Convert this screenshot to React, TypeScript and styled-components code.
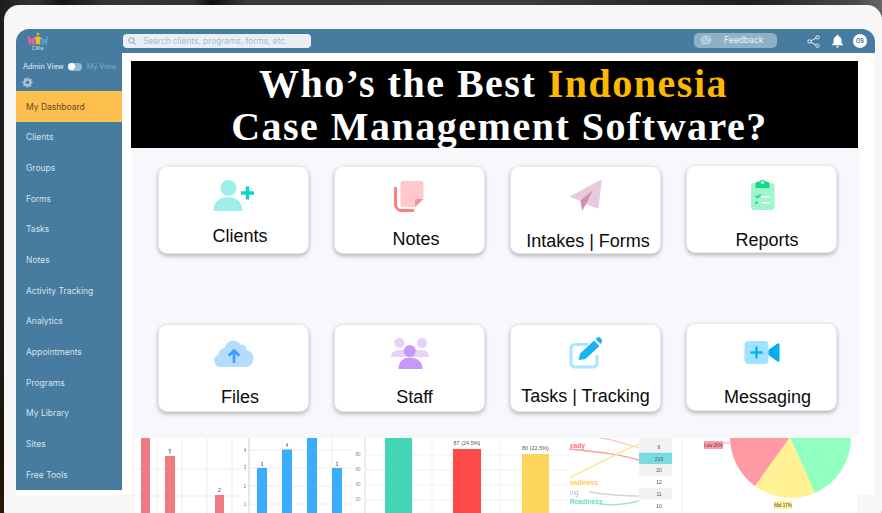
import React from "react";
import styled, { createGlobalStyle } from "styled-components";

const Global = createGlobalStyle`
  html, body { margin: 0; padding: 0; width: 882px; height: 513px; overflow: hidden; }
  body {
    background:
      linear-gradient(90deg, #1d1d1b 0, #36362f 4%, #141412 7%, #35352f 12%, #333 22%, #0e0e0e 24%, #3a3a36 28%, #3d3b37 60%, #1e1e1e 85%, #4a4a46 97%, #666 100%);
    font-family: "Inter", "Liberation Sans", sans-serif;
  }
`;

const Backdrop = styled.div`
  width: 882px;
  height: 513px;
  overflow: hidden;
  padding: 5px 0 0 4px;
  box-sizing: border-box;
  background: linear-gradient(180deg, transparent 0, transparent 60%, #1c1206 90%, #2a1a08 100%);
`;

const Frame = styled.div`
  width: 878px;
  height: 520px;
  padding: 24px 7px 0 12px;
  box-sizing: border-box;
  background: #f7f7f7;
  border-radius: 15px;
`;

const Shell = styled.div`
  width: 859px;
  height: 466px;
  background: #fff;
  border-radius: 13px 13px 0 0;
  display: flex;
  flex-direction: column;
`;

const Header = styled.header`
  height: 24px;
  flex: none;
  background: #477ba0;
  border-radius: 13px 13px 0 0;
  display: flex;
  align-items: center;
  padding: 0 8px 0 10px;
`;

const LogoBox = styled.div`
  width: 97px;
  flex: none;
  display: flex;
`;

const SearchBox = styled.div`
  width: 188px;
  height: 14px;
  background: #e9eff3;
  border-radius: 4px;
  display: flex;
  align-items: center;
  gap: 7px;
  padding-left: 5px;
  box-sizing: border-box;
  color: #a9bccb;
  font-size: 8.3px;
  white-space: nowrap;
`;

const FeedbackPill = styled.div`
  width: 83px;
  height: 15px;
  margin-left: auto;
  margin-top: -2px;
  background: #8fb1c8;
  border-radius: 5px;
  display: flex;
  align-items: center;
  gap: 12px;
  padding-left: 6px;
  box-sizing: border-box;
  color: #eaf1f6;
  font-size: 8.5px;
`;

const HeaderIcons = styled.div`
  display: flex;
  align-items: center;
  margin-left: 30px;
  gap: 11px;
`;

const Avatar = styled.div`
  width: 14px;
  height: 14px;
  margin-left: -2px;
  border-radius: 50%;
  background: #fff;
  color: #477ba0;
  font-size: 5.5px;
  font-weight: 700;
  display: flex;
  align-items: center;
  justify-content: center;
`;

const Body = styled.div`
  display: flex;
  flex: 1;
  min-height: 0;
`;

const Sidebar = styled.aside`
  width: 106px;
  height: 437px;
  flex: none;
  background: #477ba0;
  display: flex;
  flex-direction: column;
`;

const ViewRow = styled.div`
  display: flex;
  align-items: center;
  height: 18px;
  margin-top: 5px;
  padding-left: 7px;
  font-size: 7.25px;
  color: #e4edf3;
  white-space: nowrap;
`;

const Toggle = styled.span`
  width: 14px;
  height: 8px;
  border-radius: 4px;
  background: #9ab8cc;
  margin: 0 5px 0 4px;
  display: flex;
  align-items: center;
  &::before {
    content: "";
    width: 7px;
    height: 7px;
    border-radius: 50%;
    background: #fff;
  }
`;

const MutedLabel = styled.span`
  color: #85a9c1;
`;

const GearRow = styled.div`
  height: 16px;
  padding-left: 6px;
  display: flex;
  align-items: flex-start;
  padding-top: 1px;
  box-sizing: border-box;
`;

const NavItem = styled.div<{ $active?: boolean }>`
  height: 30.67px;
  flex: none;
  display: flex;
  align-items: center;
  padding-left: 10px;
  font-size: 8.5px;
  color: ${(p) => (p.$active ? "#5d4b26" : "#d5e2eb")};
  background: ${(p) => (p.$active ? "#fdbf4d" : "transparent")};
`;

const Main = styled.main`
  flex: 1;
  min-width: 0;
  padding: 8px 0 0 9px;
  display: flex;
  flex-direction: column;
`;

const Banner = styled.div`
  width: 727px;
  height: 87px;
  flex: none;
  box-sizing: border-box;
  padding-top: 1px;
  background: #000;
  color: #fff;
  font-family: "Liberation Serif", serif;
  font-weight: 700;
  font-size: 40px;
  line-height: 43px;
  letter-spacing: 1.5px;
  display: flex;
  flex-direction: column;
  align-items: center;
  white-space: nowrap;
`;

const BannerLine = styled.div<{ $shift: number }>`
  margin-left: ${(p) => p.$shift}px;
`;

const Gold = styled.span`
  color: #fdb900;
`;

const Panel = styled.section`
  width: 728px;
  height: 290px;
  flex: none;
  margin-left: 1px;
  box-sizing: border-box;
  background: #f7f8fb;
  border-radius: 0 0 8px 0;
  padding: 18px 0 0 26px;
  display: grid;
  grid-template-columns: repeat(4, 151px);
  grid-auto-rows: 88px;
  column-gap: 25px;
  row-gap: 70px;
`;

const Card = styled.div<{ $lift?: number }>`
  background: #fff;
  border-radius: 9px;
  border: 1px solid #e8e8ea;
  box-sizing: border-box;
  height: 88px;
  margin-top: ${(p) => -(p.$lift ?? 0)}px;
  box-shadow: 0 2px 4px rgba(0, 0, 0, 0.28);
  display: flex;
  flex-direction: column;
  align-items: center;
  padding-top: 9px;
  color: #0c0c0c;
`;

const Label = styled.div<{ $top: number; $left?: number }>`
  height: 21px;
  line-height: 21px;
  margin-top: ${(p) => p.$top}px;
  margin-left: ${(p) => p.$left ?? 0}px;
  font-family: "Liberation Sans", Arial, sans-serif;
  font-size: 18px;
  white-space: nowrap;
`;

const ChartStrip = styled.div`
  width: 725px;
  height: 75px;
  flex: none;
  margin-left: 1px;
  background: #fff;
  display: flex;
  overflow: hidden;
  filter: blur(0.45px);
  font-family: "Liberation Sans", Arial, sans-serif;
`;

const Chart = styled.svg`
  flex: none;
  display: block;
`;

const IconSvg = styled.svg`
  flex: none;
  display: block;
`;

const Glyph: React.FC<{ children: React.ReactNode }> = ({ children }) => (
  <IconSvg width={48} height={36} viewBox="0 0 48 36">{children}</IconSvg>
);

const ClientsIcon = () => (
  <Glyph>
    <circle cx="18.5" cy="12" r="8" fill="#9eeee9" />
    <path d="M3.5 35c0-9 6-14 14.5-14s14.500 5 14.500 14z" fill="#9eeee9" />
    <path d="M37.500 10.500v13M31 17h13" stroke="#0ed3cd" strokeWidth="3.500" fill="none" />
  </Glyph>
);

const NotesIcon = () => (
  <Glyph>
    <path d="M9.500 12v16.500a6 6 0 0 0 6 6h11.500" stroke="#ff7f7f" strokeWidth="3" fill="none" strokeLinecap="round" />
    <path d="M17 5h18a2.500 2.500 0 0 1 2.500 2.500V23L29 31H17a2.500 2.500 0 0 1-2.500-2.500v-21A2.500 2.500 0 0 1 17 5z" fill="#ffc9c9" />
    <path d="M37.500 23L29 31v-6a2 2 0 0 1 2-2z" fill="#ff8f8f" />
  </Glyph>
);

const PlaneIcon = () => (
  <Glyph>
    <path d="M39.200 4L8.500 20.700l10 3.800 6 3.500L36 32z" fill="#e8c9dd" strokeLinejoin="round" stroke="#e8c9dd" />
    <path d="M31 14L18.500 24.500 20 34.700l3.500-5.700z" fill="#cf8fb9" />
  </Glyph>
);

const ReportsIcon = () => (
  <Glyph>
    <rect x="13" y="8" width="23.500" height="27" rx="3" fill="#9ff5cc" />
    <path d="M17.500 13v-3.500a3 3 0 0 1 3-3h1a3.500 3.500 0 0 1 6 0h1a3 3 0 0 1 3 3V13z" fill="#10dc85" />
    <circle cx="24.500" cy="7.500" r="1.600" fill="#fff" />
    <path d="M17.500 20.700l2 2 3.200-3.500" stroke="#10dc85" strokeWidth="1.600" fill="none" />
    <circle cx="18.500" cy="27.700" r="1.300" fill="#10dc85" />
    <path d="M24 21.700h7.500M24 27.700h7.500" stroke="#fff" strokeWidth="1.600" strokeLinecap="round" />
  </Glyph>
);

const FilesIcon = () => (
  <Glyph>
    <path d="M11 33a6.500 6.500 0 0 1-2.500-12.600 7.500 7.500 0 0 1 6-6.400C16 9 20 6 24.500 6.500c3 .3 5 2 6 4.500 3.500-.7 6 1.500 6 5 4 .8 7 4 7 8.500 0 5-3.800 8.500-8.500 8.500z" fill="#b5dbff" />
    <path d="M24 28V17M19.500 21l4.500-4.500 4.500 4.500" stroke="#3b9bff" strokeWidth="2.600" fill="none" strokeLinecap="round" strokeLinejoin="round" />
  </Glyph>
);

const StaffIcon = () => (
  <Glyph>
    <circle cx="13.500" cy="9" r="5" fill="#e6d0fc" />
    <circle cx="36" cy="9" r="5" fill="#e6d0fc" />
    <path d="M5 23c0-4.500 3.500-7 8.500-7h21c5 0 8.500 2.500 8.500 7z" fill="#e6d0fc" />
    <circle cx="23.800" cy="17" r="6" fill="#c598f9" />
    <path d="M12.500 35c0-7.500 4.500-11.500 11.500-11.500S36.500 27.500 36.500 35z" fill="#c598f9" />
  </Glyph>
);

const TasksIcon = () => (
  <Glyph>
    <path d="M26 10.500H13a4 4 0 0 0-4 4V29a4 4 0 0 0 4 4h18a4 4 0 0 0 4-4V21" stroke="#a6e6ff" strokeWidth="3" fill="none" />
    <path d="M16.500 26l1.700-6.500L32 6.500l5.500 5.500L23.500 25z" fill="#16b3f5" />
    <path d="M33.500 5l1.800-1.500a2 2 0 0 1 2.500 0l2 2a2 2 0 0 1 0 2.500L38.500 10z" fill="#16b3f5" />
  </Glyph>
);

const VideoIcon = () => (
  <Glyph>
    <rect x="6.500" y="8" width="24" height="23" rx="4" fill="#9fe3ff" />
    <path d="M18.500 14.500v10M13.500 19.500h10" stroke="#0aaef0" strokeWidth="2.400" strokeLinecap="round" />
    <path d="M30.500 17l9-6.500a1.500 1.500 0 0 1 2 1v16a1.500 1.500 0 0 1-2 1l-9-6.500z" fill="#00aff0" />
  </Glyph>
);

const Logo = () => (
  <svg width="24" height="21" viewBox="0 0 26 22">
    <circle cx="13" cy="3" r="1.600" fill="#f5a623" />
    <circle cx="3" cy="6" r="1.200" fill="#f2648e" />
    <circle cx="23" cy="6" r="1.200" fill="#4fa3d1" />
    <path d="M2 7l4 1.500L9 7v8H7v-3H5v3H3.500z" fill="#f2648e" />
    <path d="M17 7l3 1.500L24 7l-1.500 8H21v-3h-2v3h-2z" fill="#4fa3d1" />
    <path d="M8.500 7.500L13 5l4.500 2.500-2 1.500V14h-5V9z" fill="#f7b52c" />
    <text x="13" y="20.500" fontSize="5" letterSpacing="0.6" textAnchor="middle" fill="#dbe6ee" fontFamily="Liberation Sans">CMw</text>
  </svg>
);

const SearchGlyph = () => (
  <svg width="8" height="8" viewBox="0 0 8 8">
    <circle cx="3.400" cy="3.400" r="2.500" stroke="#9db4c5" strokeWidth="1.100" fill="none" />
    <path d="M5.300 5.300L7.500 7.500" stroke="#9db4c5" strokeWidth="1.100" />
  </svg>
);

const BubbleGlyph = () => (
  <svg width="12" height="11" viewBox="0 0 12 11">
    <path d="M6 .5c3 0 5.500 1.900 5.500 4.500S9 9.500 6 9.500c-.7 0-1.300-.1-2-.3L1.500 10.500l.6-2.500C1 7.200.500 6.100.500 5 .500 2.400 3 .5 6 .5z" fill="#b5cddd" />
    <circle cx="4.200" cy="4" r=".7" fill="#8fb1c8" />
    <circle cx="7.800" cy="4" r=".7" fill="#8fb1c8" />
    <path d="M3.800 5.800c1.200 1.200 3.200 1.200 4.400 0" stroke="#8fb1c8" strokeWidth=".7" fill="none" />
  </svg>
);

const ShareGlyph = () => (
  <svg width="13" height="13" viewBox="0 0 13 13">
    <path d="M10.500 2.300L2.500 6.500l8 4.200" stroke="#e8f0f5" strokeWidth="1" fill="none" />
    <circle cx="10.500" cy="2.300" r="1.700" fill="#477ba0" stroke="#e8f0f5" strokeWidth="1" />
    <circle cx="2.500" cy="6.500" r="1.700" fill="#477ba0" stroke="#e8f0f5" strokeWidth="1" />
    <circle cx="10.500" cy="10.700" r="1.700" fill="#477ba0" stroke="#e8f0f5" strokeWidth="1" />
  </svg>
);

const BellGlyph = () => (
  <svg width="13" height="14" viewBox="0 0 13 14">
    <path d="M6.500 .8c.6 0 1 .4 1 1v.4c2 .5 3 2.100 3 4.300v2.500l1.500 1.800v.4H1v-.4l1.500-1.800V6.500c0-2.200 1-3.800 3-4.300v-.4c0-.6.400-1 1-1z" fill="#fff" />
    <path d="M5 12.300h3a1.500 1.400 0 0 1-3 0z" fill="#fff" />
  </svg>
);

const GearGlyph = () => (
  <svg width="11" height="11" viewBox="0 0 24 24">
    <path
      fill="#a9c3d4"
      fillRule="evenodd"
      d="M10 1h4l.6 3.100 1.900.8 2.600-1.800 2.800 2.800-1.800 2.600.8 1.900L23 10v4l-3.100.6-.8 1.900 1.800 2.600-2.800 2.800-2.600-1.800-1.900.8L14 23h-4l-.6-3.100-1.900-.8-2.600 1.800-2.800-2.800 1.800-2.600-.8-1.900L1 14v-4l3.100-.6.8-1.900-1.800-2.600 2.800-2.800 2.600 1.800 1.900-.8zM12 8a4 4 0 1 0 0 8 4 4 0 0 0 0-8z"
    />
  </svg>
);

const grid = "#ececec";

const PinkChart = () => (
  <Chart width={107} height={75} viewBox="0 0 107 75">
    <path d="M1 0V75M25 0V75M50 0V75M75 0V75M100 0V75M0 31H107M0 58H107" stroke={grid} strokeWidth="1" fill="none" />
    <rect x="9" y="0" width="9" height="75" fill="#ef7b82" />
    <rect x="33" y="18" width="10" height="57" fill="#ef7b82" />
    <rect x="83" y="57" width="9" height="18" fill="#ef7b82" />
    <text x="38" y="15" fontSize="5" textAnchor="middle" fill="#444">5</text>
    <text x="87.500" y="54" fontSize="5" textAnchor="middle" fill="#444">2</text>
  </Chart>
);

const BlueChart = () => (
  <Chart width={125} height={75} viewBox="0 0 125 75">
    <path d="M10 0V75" stroke="#cfcfcf" />
    <path d="M43 0V75M68 0V75M93 0V75M10 12H112M10 30H112M10 48H112M10 66H112" stroke={grid} fill="none" />
    {[[18, 30], [43, 11.500], [68, 0], [93, 30]].map(([x, y]) => (
      <rect key={x} x={x} y={y} width="10" height={75 - y} fill="#3badff" />
    ))}
    <text x="23" y="28" fontSize="4.500" textAnchor="middle" fill="#444">3</text>
    <text x="48" y="9" fontSize="4.500" textAnchor="middle" fill="#444">4</text>
    <text x="98" y="28" fontSize="4.500" textAnchor="middle" fill="#444">3</text>
    {[["4", 14], ["3", 31], ["2", 50], ["1", 68]].map(([t, y]) => (
      <text key={t} x="6" y={y} fontSize="4.500" textAnchor="middle" fill="#777">{t}</text>
    ))}
    {[["80", 18], ["60", 33], ["40", 48], ["20", 63]].map(([t, y]) => (
      <text key={t} x="119" y={y} fontSize="4.500" textAnchor="middle" fill="#888">{t}</text>
    ))}
  </Chart>
);

const BarChart = () => (
  <Chart width={205} height={75} viewBox="0 0 205 75">
    <path d="M1 0V75" stroke="#d9d9d9" />
    <path d="M0 17H205M0 32H205M0 47H205M0 62H205M68 0V75M136 0V75" stroke="#f1f1f1" fill="none" />
    <rect x="21" y="0" width="27" height="75" fill="#43d5b6" />
    <rect x="89" y="11" width="28" height="64" fill="#ff4a4a" />
    <rect x="158" y="16" width="27" height="59" fill="#ffd65c" />
    <text x="103" y="7" fontSize="5.500" textAnchor="middle" fill="#555">87 (24.5%)</text>
    <text x="171.500" y="12" fontSize="5.500" textAnchor="middle" fill="#555">80 (22.5%)</text>
  </Chart>
);

const SankeyChart = () => (
  <Chart width={70} height={75} viewBox="0 0 70 75">
    <path d="M0 11C30 14 50 16 70 22" stroke="#ff9aa0" strokeWidth="1.400" fill="none" />
    <path d="M30 0C45 1 55 6 70 10" stroke="#ffc0c3" strokeWidth="1.200" fill="none" />
    <path d="M0 40C25 28 50 14 70 6" stroke="#ffe08f" strokeWidth="1.200" fill="none" />
    <path d="M20 54C40 57 55 58 70 58" stroke="#d5d5d5" strokeWidth="1.400" fill="none" />
    <path d="M30 66C45 68 58 66 70 63" stroke="#9ae6d4" strokeWidth="1.300" fill="none" />
    <text x="1" y="10" fontSize="6.500" fontWeight="700" fill="#ff6b72">eady</text>
    <text x="1" y="47" fontSize="6.500" fontWeight="700" fill="#ffc84a">eadiness</text>
    <text x="1" y="57" fontSize="6.500" fill="#bbb">ing</text>
    <text x="1" y="66" fontSize="6.500" fontWeight="700" fill="#5fdcc0">Readiness</text>
  </Chart>
);

const rows: [string, string][] = [
  ["6", "#f2f2f2"],
  ["210", "#78dce0"],
  ["20", "#f2f2f2"],
  ["12", "#ffffff"],
  ["11", "#f2f2f2"],
  ["10", "#ffffff"],
];

const TableChart = () => (
  <Chart width={33} height={75} viewBox="0 0 33 75">
    {rows.map(([t, c], i) => (
      <g key={t}>
        <rect x="0" y={3 + i * 11.700} width="33" height="11.700" fill={c} />
        <text x="20" y={11 + i * 11.700} fontSize="5" textAnchor="middle" fill="#555">{t}</text>
      </g>
    ))}
    <rect x="0" y="0" width="33" height="3" fill="#f2f2f2" />
  </Chart>
);

const PieChart = () => (
  <Chart width={185} height={75} viewBox="0 0 185 75">
    <path d="M10 0V75" stroke="#efefef" />
    <path d="M118 0L83 48A61 61 0 0 1 58 0z" fill="#ff99a3" />
    <path d="M118 -1L83 48A61 61 0 0 0 143 55z" fill="#fff194" />
    <path d="M118 -1L143 55A61 61 0 0 0 179 0z" fill="#90ffc0" />
    <path d="M51 5H58" stroke="#ff99a3" />
    <rect x="32" y="3" width="19" height="8" fill="#ff99a3" />
    <text x="41.500" y="9" fontSize="4.500" textAnchor="middle" fill="#444">Low 26%</text>
    <path d="M112 61V63" stroke="#fff194" />
    <rect x="102" y="63" width="18" height="8" fill="#fff194" />
    <text x="111" y="69" fontSize="4.500" textAnchor="middle" fill="#444">Mid 17%</text>
  </Chart>
);

const navItems = [
  "My Dashboard", "Clients", "Groups", "Forms", "Tasks", "Notes", "Activity Tracking",
  "Analytics", "Appointments", "Programs", "My Library", "Sites", "Free Tools",
];

const cards: { label: string; icon: React.ReactNode; top: number; left?: number; lift?: number }[] = [
  { label: "Clients", icon: <ClientsIcon />, top: 14, left: 13 },
  { label: "Notes", icon: <NotesIcon />, top: 17, left: 13 },
  { label: "Intakes | Forms", icon: <PlaneIcon />, top: 19, left: 5 },
  { label: "Reports", icon: <ReportsIcon />, top: 19, left: 11, lift: 1 },
  { label: "Files", icon: <FilesIcon />, top: 17, left: 13 },
  { label: "Staff", icon: <StaffIcon />, top: 17, left: 10 },
  { label: "Tasks | Tracking", icon: <TasksIcon />, top: 16 },
  { label: "Messaging", icon: <VideoIcon />, top: 18, left: 12, lift: 1 },
];

export default function App() {
  return (
    <>
      <Global />
      <Backdrop>
        <Frame>
          <Shell>
            <Header>
              <LogoBox><Logo /></LogoBox>
              <SearchBox>
                <SearchGlyph />
                Search clients, programs, forms, etc.
              </SearchBox>
              <FeedbackPill>
                <BubbleGlyph />
                Feedback
              </FeedbackPill>
              <HeaderIcons>
                <ShareGlyph />
                <BellGlyph />
                <Avatar>OS</Avatar>
              </HeaderIcons>
            </Header>
            <Body>
              <Sidebar>
                <ViewRow>
                  Admin View
                  <Toggle />
                  <MutedLabel>My View</MutedLabel>
                </ViewRow>
                <GearRow><GearGlyph /></GearRow>
                {navItems.map((n, i) => (
                  <NavItem key={n} $active={i === 0}>{n}</NavItem>
                ))}
              </Sidebar>
              <Main>
                <Banner>
                  <BannerLine $shift={-2}>Who’s the Best <Gold>Indonesia</Gold></BannerLine>
                  <BannerLine $shift={10}>Case Management Software?</BannerLine>
                </Banner>
                <Panel>
                  {cards.map((c) => (
                    <Card key={c.label} $lift={c.lift}>
                      {c.icon}
                      <Label $top={c.top} $left={c.left}>{c.label}</Label>
                    </Card>
                  ))}
                </Panel>
                <ChartStrip>
                  <PinkChart />
                  <BlueChart />
                  <BarChart />
                  <SankeyChart />
                  <TableChart />
                  <PieChart />
                </ChartStrip>
              </Main>
            </Body>
          </Shell>
        </Frame>
      </Backdrop>
    </>
  );
}
